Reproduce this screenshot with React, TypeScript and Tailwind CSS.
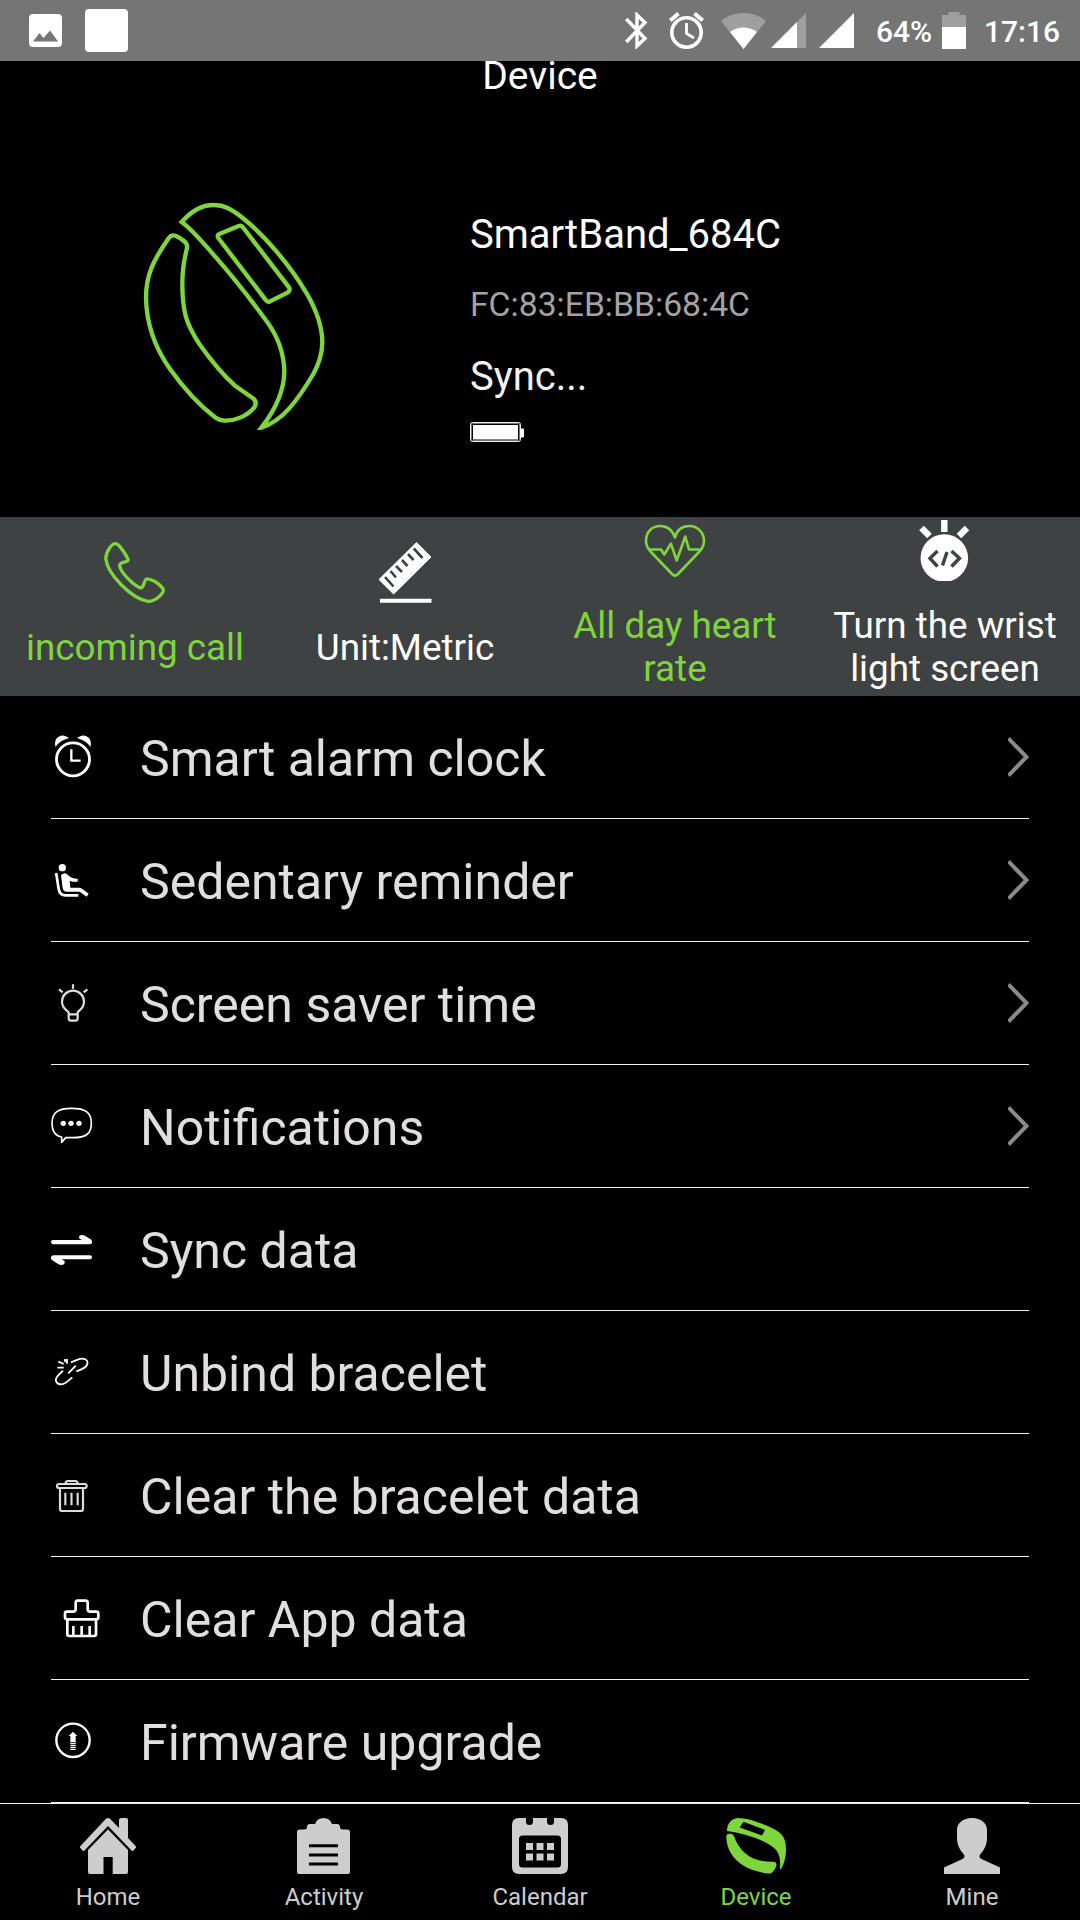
import React from "react";

const ACTIONS = [
  { label: "incoming call", active: true, icon: <PhoneIcon /> },
  { label: "Unit:Metric", active: false, icon: <RulerIcon /> },
  { label: "All day heart rate", active: true, icon: <HeartIcon /> },
  { label: "Turn the wrist light screen", active: false, icon: <WristLightIcon /> },
];

const SETTINGS = [
  { label: "Smart alarm clock", arrow: true, icon: <AlarmGlyph /> },
  { label: "Sedentary reminder", arrow: true, icon: <SeatGlyph /> },
  { label: "Screen saver time", arrow: true, icon: <BulbGlyph /> },
  { label: "Notifications", arrow: true, icon: <ChatGlyph /> },
  { label: "Sync data", arrow: false, icon: <SyncGlyph /> },
  { label: "Unbind bracelet", arrow: false, icon: <UnlinkGlyph /> },
  { label: "Clear the bracelet data", arrow: false, icon: <TrashGlyph /> },
  { label: "Clear App data", arrow: false, icon: <BrushGlyph /> },
  { label: "Firmware upgrade", arrow: false, icon: <UpgradeGlyph /> },
];

const TABS = [
  { label: "Home", active: false, icon: <HomeIcon /> },
  { label: "Activity", active: false, icon: <ActivityIcon /> },
  { label: "Calendar", active: false, icon: <CalendarIcon /> },
  { label: "Device", active: true, icon: <DeviceIcon /> },
  { label: "Mine", active: false, icon: <MineIcon /> },
];

function PhoneIcon() {
  return (
    <svg width="62" height="61" viewBox="0 0 62 61" fill="none" stroke="currentColor" strokeWidth="3.3" strokeLinejoin="round">
      <path d="M11 1.7C14 1 20 9 24 17C25.5 21 15.5 19 15.5 23.5C17 31 29 43 36.5 46C40.5 46.5 39.5 37 43 36.8C48 37 55 41 59.2 47C60.5 51.5 51 59.6 44 59.3C28 57 4 33 1.8 17C1.8 9 8 2 11 1.7Z" />
    </svg>
  );
}

function RulerIcon() {
  return (
    <svg width="61" height="61" viewBox="0 0 61 61">
      <path d="M41.5 0.5L56 15L18.6 52L4 37.5Z" fill="currentColor" stroke="currentColor" strokeLinejoin="round" />
      <path d="M10 35L18.5 44.5M15.5 29L21 35.5M21 24L27 30M27 18L32.5 24M33 12L38.5 18M38.8 6.5L47.5 16" stroke="#3f4242" strokeWidth="2.6" />
      <rect x="5" y="56.8" width="51.5" height="4" rx="0.5" fill="currentColor" />
    </svg>
  );
}

function HeartIcon() {
  return (
    <svg width="62" height="61" viewBox="0 0 62 61" fill="none" stroke="currentColor" strokeWidth="2.6" strokeLinejoin="round">
      <path d="M31 17.5C28 9 22 6 16 6C8 6 2 12 2 21C2 26 4 29 7 32L28 54Q31 57 34 54L55 32C58 29 60 26 60 21C60 12 53 6 45.5 6C39 6 33 9 31 17.5Z" />
      <path d="M5.5 29.5H17L20.3 34.5L26.9 23.7L32.7 40.5L41.3 16.5L45 29.5H57" />
    </svg>
  );
}

function WristLightIcon() {
  return (
    <svg width="62" height="61" viewBox="0 0 62 61" fill="none">
      <circle cx="30.3" cy="38" r="23.8" fill="currentColor" />
      <path d="M30.3 0V12M7.5 8L15.5 16M53 8L45 16" stroke="currentColor" strokeWidth="6.4" />
      <path d="M23.5 31L16 38.3L23.5 46.5M37.5 31L45.5 38.3L37.5 46.5M33 32L28.5 45.5" stroke="#3f4242" strokeWidth="3.4" />
    </svg>
  );
}

function Glyph({ children }: { children: React.ReactNode }) {
  return (
    <svg className="shrink-0 text-white" width="60" height="60" viewBox="0 0 180 180" fill="none" stroke="currentColor" strokeWidth="7" strokeLinejoin="round">
      {children}
    </svg>
  );
}

function AlarmGlyph() {
  return (
    <Glyph>
      <circle cx="66" cy="97" r="49.5" strokeWidth="8.5" />
      <path d="M61 67V101H89" strokeLinejoin="miter" />
      <path d="M14 60C5 32 32 14 54 33C38 38 22 46 14 60ZM118 60C127 32 100 14 78 33C94 38 110 46 118 60Z" fill="currentColor" stroke="none" />
    </Glyph>
  );
}

function SeatGlyph() {
  return (
    <Glyph>
      <circle cx="34" cy="53" r="11" fill="currentColor" stroke="none" />
      <path d="M15.5 69L23 117Q26 136 44 136H82" strokeWidth="8" />
      <path d="M30 76Q42 62 54 78Q66 88 80 86V95Q66 97 56 92L58 113H84Q90 113 94 117L113 131L107 140L86 125H46Q37 125 35 114Z" fill="currentColor" stroke="none" />
    </Glyph>
  );
}

function BulbGlyph() {
  return (
    <Glyph>
      <g stroke="#e0e0e0" strokeWidth="6.5">
        <path d="M53 136V118C48 112 33 106 33 86A33 33 0 0 1 99 86C99 106 84 112 80 118V136Q80 143 74 143H59Q53 143 53 136M53 124H80" />
        <path d="M66 34V47M24 49L35 58M109 49L98 58" />
      </g>
    </Glyph>
  );
}

function ChatGlyph() {
  return (
    <Glyph>
      <path d="M32 123C12 120 3 108 3 82C3 48 22 37 62 37C102 37 121 48 121 82C121 114 104 125 66 125H44L32 139Z" strokeWidth="5" />
      <g fill="currentColor" stroke="none">
        <circle cx="37" cy="82" r="8" />
        <circle cx="60" cy="82" r="8" />
        <circle cx="84" cy="82" r="8" />
      </g>
    </Glyph>
  );
}

function SyncGlyph() {
  return (
    <Glyph>
      <g fill="currentColor" stroke="none">
        <path d="M6 63H92L84 57Q83 49 92 48Q99 48 104 52L119 61Q125 66 123 72Q121 76 115 76H6Q0 75 0 69Q0 63 6 63Z" />
        <path d="M117 121H32L41 127Q43 136 34 138Q26 138 20 134L4 124Q-2 119 0 114Q2 109 8 109H117Q123 109 123 115Q123 121 117 121Z" />
      </g>
    </Glyph>
  );
}

function UnlinkGlyph() {
  return (
    <Glyph>
      <g strokeWidth="5.4">
        <path d="M60 61L80 53C98 46 112 52 109 66C107 77 94 82 76 88" />
        <path d="M74 71L52 94M36 86L20 102C8 116 18 127 32 127C44 126 54 114 64 106" />
        <path d="M22 59L38 66M41 51L43 60M48 51V65M19 77H38" />
      </g>
    </Glyph>
  );
}

function TrashGlyph() {
  return (
    <Glyph>
      <g stroke="#dcdcdc" strokeWidth="6.5">
        <rect x="18" y="57" width="89" height="12" rx="6" />
        <path d="M43 56Q45 48 50 48H74Q79 48 80 56M27 71V131Q27 138 34 138H89Q96 138 96 131V71M43 83V121M61.5 83V121M80 83V121" />
      </g>
    </Glyph>
  );
}

function BrushGlyph() {
  return (
    <Glyph>
      <g strokeWidth="8">
        <path d="M74 45Q74 38 80 38H104Q110 38 110 45V63Q110 71 118 71H136Q142 71 142 77V88Q142 94 136 94H48Q42 94 42 88V77Q42 71 48 71H66Q74 71 74 63Z" />
        <path d="M49 96V138Q49 144 55 144H129Q135 144 135 138V96M67 114V143M92 114V143M116 114V143" />
      </g>
    </Glyph>
  );
}

function UpgradeGlyph() {
  return (
    <Glyph>
      <circle cx="66" cy="88" r="50" />
      <path d="M66 62L79 75H74V93H58V75H53Z" fill="currentColor" stroke="none" />
      <path d="M58 97H74M58 103H74M58 109H74M58 115H74" strokeWidth="3.6" />
    </Glyph>
  );
}

function HomeIcon() {
  return (
    <svg width="60" height="56" viewBox="0 0 60 56" fill="currentColor">
      <path d="M28 0.8Q30 -0.8 32 0.8L41 10V2Q41 0 43 0H48Q50 0 50 2V20L58 28.5V29.5L55 33H54L30 8L6 33H5L2 29.5V28.5Z" />
      <path d="M30 11.5L50 32V54Q50 56 48 56H34.7V39H25.5V56H12Q10 56 10 54V32Z" />
    </svg>
  );
}

function ActivityIcon() {
  return (
    <svg width="60" height="56" viewBox="0 0 60 56">
      <path d="M3 14Q3 11.5 6 11.5H10Q13 11.5 13 9Q13 6 16 6H21Q23 0 29.5 0Q36 0 38 6H43Q46 6 46 9Q46 11.5 49 11.5H53Q56 11.5 56 14V54Q56 56 54 56H5Q3 56 3 54Z" fill="currentColor" />
      <path d="M15 27.8H44M15 37H44M15 46H44" stroke="#000" strokeWidth="3" />
    </svg>
  );
}

function CalendarIcon() {
  return (
    <svg width="60" height="56" viewBox="0 0 60 56" fill="currentColor">
      <path d="M9 0H16V3.5A3.5 3.5 0 0 0 23 3.5V0H37V3.5A3.5 3.5 0 0 0 44 3.5V0H51Q58 0 58 7V49Q58 56 51 56H9Q2 56 2 49V7Q2 0 9 0Z" />
      <rect x="9" y="17.5" width="42" height="32" rx="3.5" fill="#000" />
      <path d="M16 25h7v7h-7zM26.5 25h7v7h-7zM37 25h7v7h-7zM16 35.5h7v7h-7zM26.5 35.5h7v7h-7zM37 35.5h7v7h-7z" />
    </svg>
  );
}

function DeviceIcon() {
  return (
    <svg width="60" height="56" viewBox="0 0 60 56" fill="currentColor">
      <path fillRule="evenodd" d="M1 13C1 6 5 0.5 12 0C21 0 36 5 47 10.5C56 15 60 20 60 31C60 39 58 47 54.5 51.5H54C54.5 42 54 35 48 30C41 23 18 15 1 13ZM17.5 3.7L13.7 9.5L36 17.5L39 12Z" />
      <path d="M0.3 18Q1 15.7 3 15.7Q7 15.5 8 18C14 36 28 44 46 43.8Q50 43.6 50.5 46C50.5 49 48 53 45.5 55Q42 56.5 34 54C14 50 0 36 0.3 18Z" />
    </svg>
  );
}

function MineIcon() {
  return (
    <svg width="60" height="56" viewBox="0 0 60 56" fill="currentColor">
      <path d="M30 0C39 0 45 5 45 12V20C45 27 42 32 38.5 36Q36 39 39.5 41L58 49.5V56H2V49.5L20.5 41Q24 39 21.5 36C18 32 15 27 15 20V12C15 5 21 0 30 0Z" />
    </svg>
  );
}

function StatusBar() {
  return (
    <div className="relative z-10 flex h-[61px] shrink-0 items-center bg-[#757575] pl-[29px] pr-[20px] text-[30px] font-medium text-white">
      <svg width="33" height="33" viewBox="0 0 33 33">
        <rect width="33" height="33" rx="4" fill="#fff" />
        <path d="M4 27.5L10.5 19L14.5 24L21 16.5L29 27.5Z" fill="#757575" />
      </svg>
      <div className="ml-[23px] h-[43px] w-[43px] rounded-[4px] bg-white" />

      <svg className="ml-auto" width="23" height="37" viewBox="0 0 23 37" fill="none" stroke="#fff" strokeWidth="3.4">
        <path d="M1.3 7L20 26.5L12 34V3L20 10.5L1.3 30" />
      </svg>
      <svg className="ml-[21px]" width="35" height="37" viewBox="0 0 35 37" fill="none" stroke="#fff" strokeWidth="3.6">
        <circle cx="17.5" cy="20.5" r="14.7" />
        <path d="M1.3 8.5L9.5 1.5M33.7 8.5L25.5 1.5" strokeWidth="4" />
        <path d="M17.5 11V21.5L25 26" strokeWidth="2.8" />
      </svg>
      <svg className="ml-[17px]" width="45" height="36" viewBox="0 0 45 36">
        <path d="M22.5 36L0 8C13 -2.6 32 -2.6 45 8Z" fill="#9f9f9f" />
        <path d="M22.5 36L9 19C17 13 28 13 36 19Z" fill="#fff" />
      </svg>
      <svg className="ml-[5px]" width="35" height="35" viewBox="0 0 35 35">
        <path d="M0 35L35 0V35Z" fill="#9f9f9f" />
        <path d="M0 35L26 9V35Z" fill="#fff" />
      </svg>
      <svg className="ml-[13px]" width="35" height="35" viewBox="0 0 35 35">
        <path d="M0 35L35 0V35Z" fill="#fff" />
      </svg>
      <span className="ml-[22px] w-[66px] pt-[2px] leading-[35px]">64%</span>
      <svg width="24" height="37" viewBox="0 0 24 37">
        <path d="M0 3H6.5V0H17.5V3H24V15H0Z" fill="#9f9f9f" />
        <path d="M0 15H24V37H0Z" fill="#fff" />
      </svg>
      <span className="ml-[19px] flex w-[75px] justify-end pt-[2px] leading-[35px]">17:16</span>
    </div>
  );
}

function BandDrawing() {
  return (
    <svg className="ml-[143px]" width="182" height="228" viewBox="69 66 546 684" fill="none" stroke="#7ed63c" strokeWidth="13" strokeLinejoin="round">
      <path strokeLinejoin="miter" d="M185 126C215 92 248 74 283 75C312 75 335 87 372 117C430 164 505 248 560 340C592 395 607 438 607 488C606 525 598 550 580 582C530 665 488 722 424 743C470 684 493 630 493 572C491 520 474 470 440 424C395 362 330 280 285 229C240 178 215 147 185 126Z" />
      <path d="M146 175Q154 162 168 168Q180 173 192 183Q203 192 201 204C192 240 187 270 187 310C187 395 198 430 238 492C270 537 305 582 345 617L398 654Q413 665 403 682C382 708 345 723 314 722Q298 721 287 713C240 678 195 630 150 567C100 497 79 425 78 352C78 285 100 240 146 175Z" />
      <path d="M298 162L356 138Q363 135 368 141L507 322Q512 331 504 337L450 364Q443 368 438 361L295 174Q290 166 298 162Z" />
    </svg>
  );
}

export default function App() {
  return (
    <div className="flex h-[1920px] w-[1080px] flex-col overflow-hidden bg-black font-[Roboto,sans-serif]">
      <StatusBar />

      {/* Connected device */}
      <section className="h-[456px] shrink-0">
        <h1 className="-mt-2 text-center text-[39px] leading-[46px] text-white">Device</h1>
        <div className="mt-[103px] flex items-start">
          <BandDrawing />
          <div className="ml-[145px] mt-[10px] flex flex-col">
            <p className="text-[40px] leading-[46px] text-white">SmartBand_684C</p>
            <p className="mt-[27px] text-[33.7px] leading-[40px] text-[#a3a3a3]">FC:83:EB:BB:68:4C</p>
            <p className="mt-[29px] text-[40px] leading-[46px] text-[#f2f2f2]">Sync...</p>
            <svg className="mt-[22px]" width="54" height="20" viewBox="0 0 54 20">
              <rect x="0.5" y="0.5" width="50" height="19" rx="2" fill="#000" stroke="#eee" />
              <rect x="1.5" y="1.5" width="48" height="17" rx="1" fill="none" stroke="#777" />
              <rect x="3" y="3" width="45" height="14.5" fill="#fff" />
              <rect x="50.5" y="6.5" width="3.5" height="9" rx="1" fill="#fff" />
            </svg>
          </div>
        </div>
      </section>

      {/* Quick actions */}
      <section className="grid h-[179px] shrink-0 grid-cols-4 bg-[#3f4242]">
        {ACTIONS.map((item) => (
          <button
            key={item.label}
            className={`flex flex-col items-center justify-center px-2 pb-[3px] ${item.active ? "text-[#7ed63c]" : "text-white"}`}
          >
            {item.icon}
            <span className="mt-[23px] text-center text-[36.8px] leading-[43px]">{item.label}</span>
          </button>
        ))}
      </section>

      {/* Settings list */}
      <ul className="mx-[51px] shrink-0">
        {SETTINGS.map((item) => (
          <li key={item.label} className="flex h-[123px] items-center border-b border-[#f0f0f0]">
            {item.icon}
            <span className="ml-[29px] pt-[4px] text-[50px] leading-[60px] text-[#e0dede]">{item.label}</span>
            {item.arrow && (
              <svg className="ml-auto" width="21" height="40" viewBox="0 0 21 40" fill="none" stroke="#8a8a8a" strokeWidth="4">
                <path d="M0.5 1.5L18.5 20L0.5 38.5" />
              </svg>
            )}
          </li>
        ))}
      </ul>

      {/* Tab bar */}
      <nav className="grid h-[117px] shrink-0 grid-cols-5 border-t border-[#f0f0f0]">
        {TABS.map((tab) => (
          <a
            key={tab.label}
            className={`flex flex-col items-center pt-[14px] ${tab.active ? "text-[#7ed63c]" : "text-[#cdcdcd]"}`}
          >
            {tab.icon}
            <span className="mt-[9px] text-[24px] leading-[29px]">{tab.label}</span>
          </a>
        ))}
      </nav>
    </div>
  );
}
